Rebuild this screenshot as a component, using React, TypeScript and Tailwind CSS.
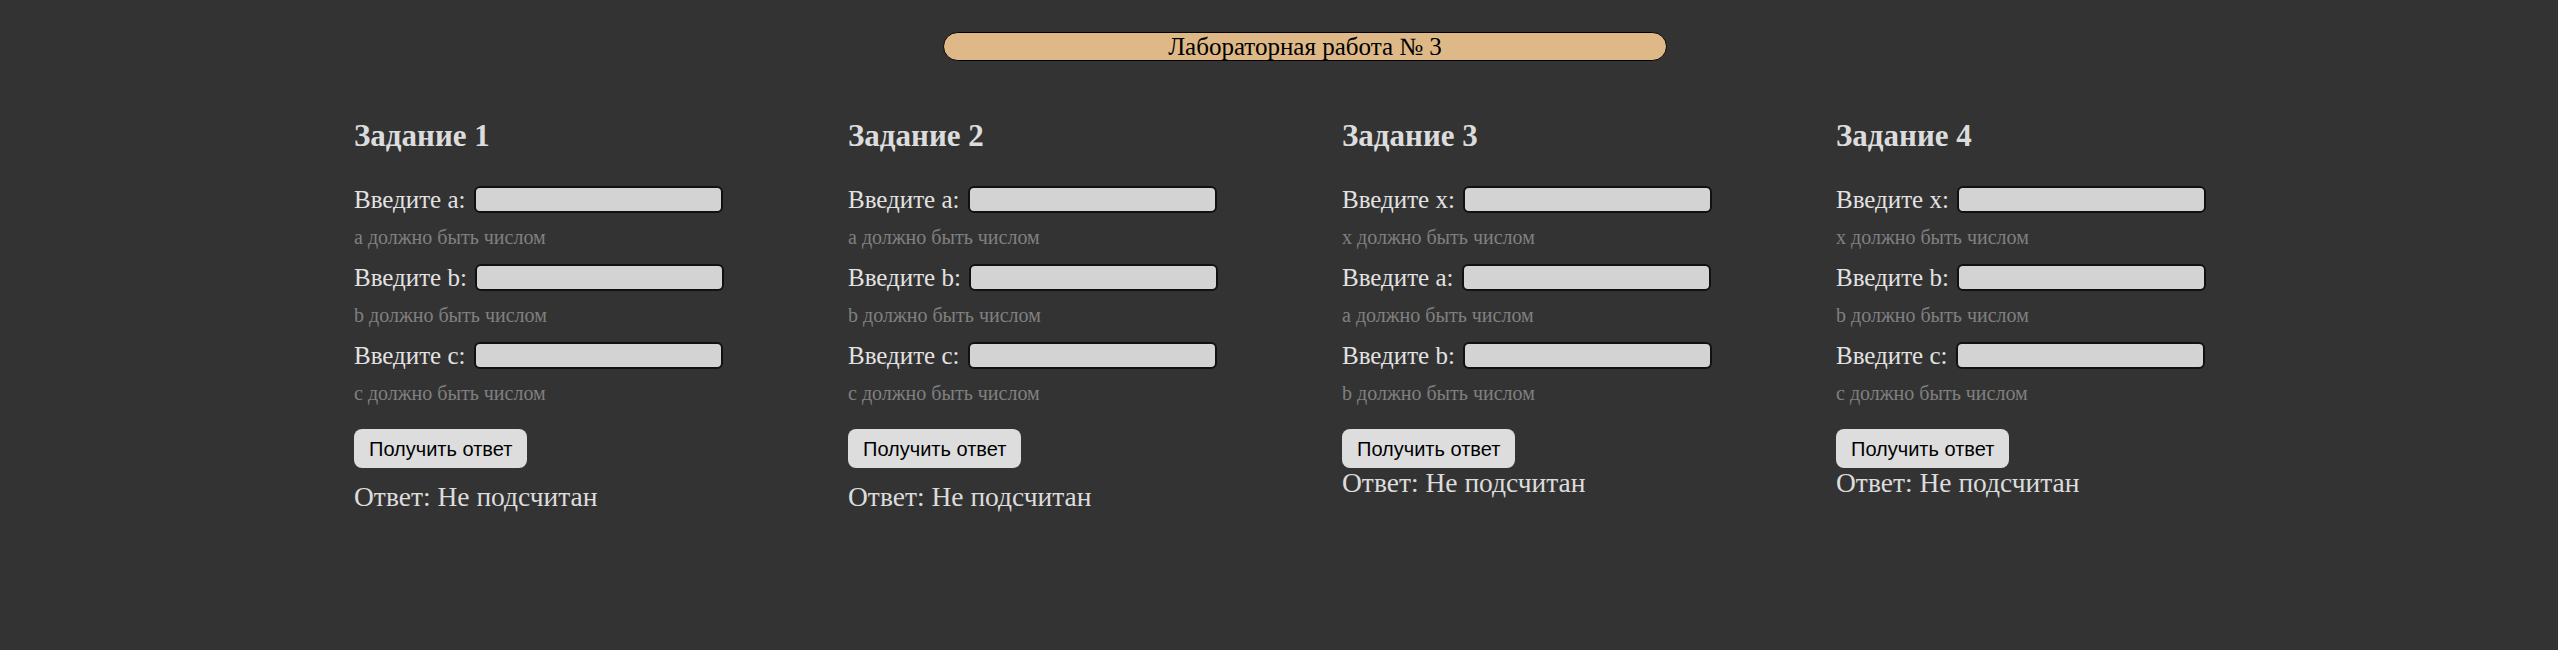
import React from 'react'

type Task = {
  title: string
  vars: string[]
  gap: boolean
}

const TASKS: Task[] = [
  { title: 'Задание 1', vars: ['a', 'b', 'c'], gap: true },
  { title: 'Задание 2', vars: ['a', 'b', 'c'], gap: true },
  { title: 'Задание 3', vars: ['x', 'a', 'b'], gap: false },
  { title: 'Задание 4', vars: ['x', 'b', 'c'], gap: false },
]

function TaskColumn({ task }: { task: Task }) {
  return (
    <div className="flex flex-col items-start">
      <h3 className="text-[31px] leading-[34px] font-bold text-[#dcdcdc]">{task.title}</h3>

      <div className="mt-[33px] flex flex-col">
        {task.vars.map((v, i) => (
          <div key={v} className={i > 0 ? 'mt-[15px]' : ''}>
            <div className="flex h-[27px] items-center gap-[8px]">
              <span className="text-[25px] leading-[27px] text-[#e2e2e2]">Введите {v}:</span>
              <input
                type="text"
                className="h-[27px] w-[249px] rounded-[6px] border-2 border-[#111] bg-[#d3d3d3] outline-none"
              />
            </div>
            <p className="mt-[12px] text-[20px] leading-[24px] text-[#808080]">{v} должно быть числом</p>
          </div>
        ))}
      </div>

      <button
        className="mt-[24px] h-[39px] rounded-[8px] bg-[#dddddd] px-[15px] text-[20px] text-black"
        style={{ fontFamily: '"Liberation Sans", Arial, sans-serif' }}
      >
        Получить ответ
      </button>

      <p className={(task.gap ? 'mt-[14px] ' : '') + 'text-[27.5px] leading-[30px] text-[#dcdcdc]'}>
        Ответ: Не подсчитан
      </p>
    </div>
  )
}

export default function App() {
  return (
    <main className="min-h-[650px] bg-[#333333] font-['Liberation_Serif','Times_New_Roman',serif]">
      {/* Header */}
      <div className="pt-[32px]">
        <div className="ml-[943px] h-[29px] w-[724px] rounded-full border border-black bg-[#deb887] text-center text-[25px] leading-[27px] text-black">
          Лабораторная работа № 3
        </div>
      </div>

      {/* Tasks */}
      <section className="mt-[58px] grid grid-cols-[repeat(4,494px)] pl-[354px]">
        {TASKS.map((t) => (
          <TaskColumn key={t.title} task={t} />
        ))}
      </section>
    </main>
  )
}
